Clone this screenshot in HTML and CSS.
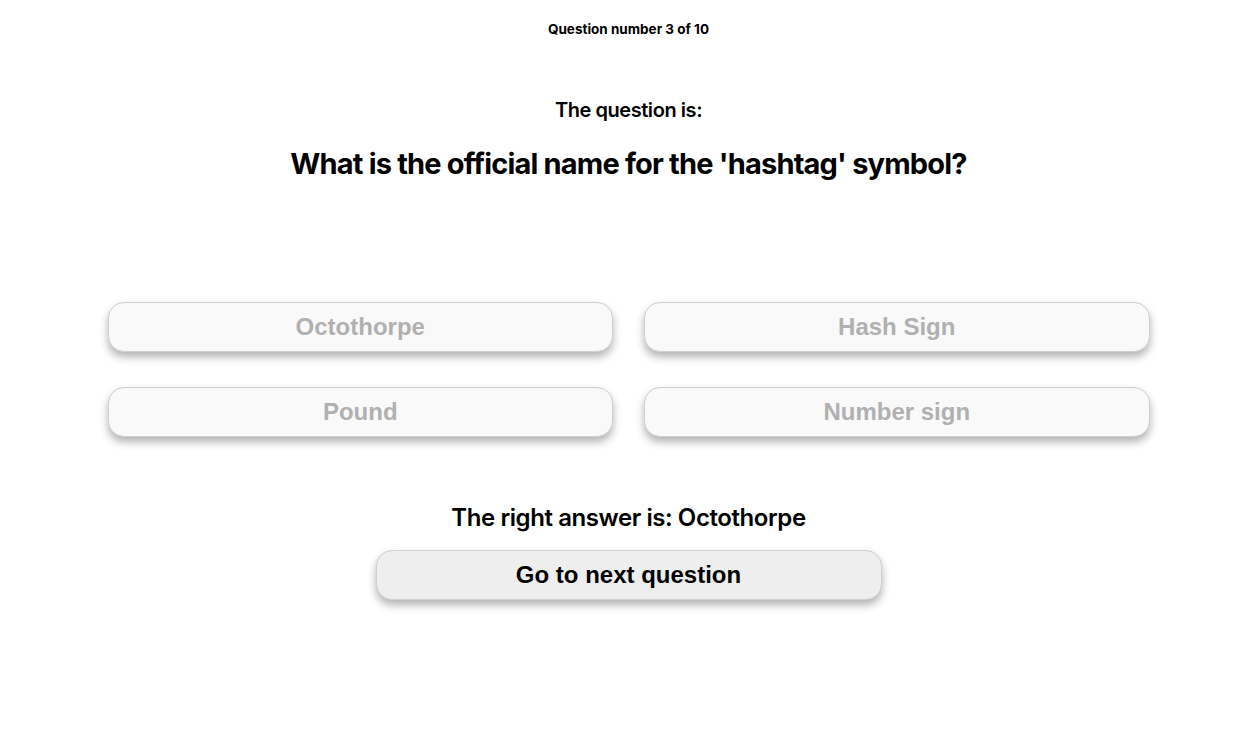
FILE: index.html
```html
<!DOCTYPE html>
<html lang="en">
<head>
<meta charset="utf-8">
<title>Quiz</title>
<link rel="stylesheet" href="styles.css">
</head>
<body>
<main class="quiz">
  <p class="counter">Question number 3 of 10</p>
  <h2 class="label">The question is:</h2>
  <h1 class="question">What is the official name for the 'hashtag' symbol?</h1>
  <div class="answers">
    <button class="answer" disabled>Octothorpe</button>
    <button class="answer" disabled>Hash Sign</button>
    <button class="answer" disabled>Pound</button>
    <button class="answer" disabled>Number sign</button>
  </div>
  <p class="result">The right answer is: Octothorpe</p>
  <button class="next">Go to next question</button>
</main>
</body>
</html>
```
FILE: styles.css
```css
html, body {
  margin: 0;
  padding: 0;
  background: #fff;
}
body {
  font-family: Inter, "Liberation Sans", sans-serif;
  color: #000;
  min-height: 754px;
}
.quiz {
  display: flex;
  flex-direction: column;
  align-items: center;
  padding: 21px 3px 60px 0;
}
.counter {
  margin: 0;
  font-size: 13.5px;
  font-weight: 700;
  line-height: 16px;
}
.label {
  margin: 61px 0 0;
  font-size: 20px;
  font-weight: 600;
  line-height: 24px;
  letter-spacing: -0.44px;
}
.question {
  margin: 24px 0 0;
  font-size: 29px;
  font-weight: 700;
  line-height: 36px;
  letter-spacing: -0.82px;
}
.answers {
  margin-top: 120px;
  width: 1042px;
  display: grid;
  grid-template-columns: 1fr 1fr;
  column-gap: 31px;
  row-gap: 35px;
}
.answer, .next {
  height: 50px;
  border: 1px solid #cfcfcf;
  border-radius: 16px;
  font-family: "Liberation Sans", Arial, sans-serif;
  font-weight: 700;
  box-shadow: 0 5px 8px rgba(0, 0, 0, 0.3);
  padding: 0;
}
.answer {
  background: #f9f9f9;
  color: #b0b0b0;
  font-size: 24px;
}
.result {
  margin: 66px 0 0;
  font-size: 24px;
  font-weight: 600;
  line-height: 30px;
  letter-spacing: -0.42px;
}
.next {
  margin-top: 17px;
  width: 506px;
  background: #eeeeee;
  color: #000;
  font-size: 24px;
}
```
